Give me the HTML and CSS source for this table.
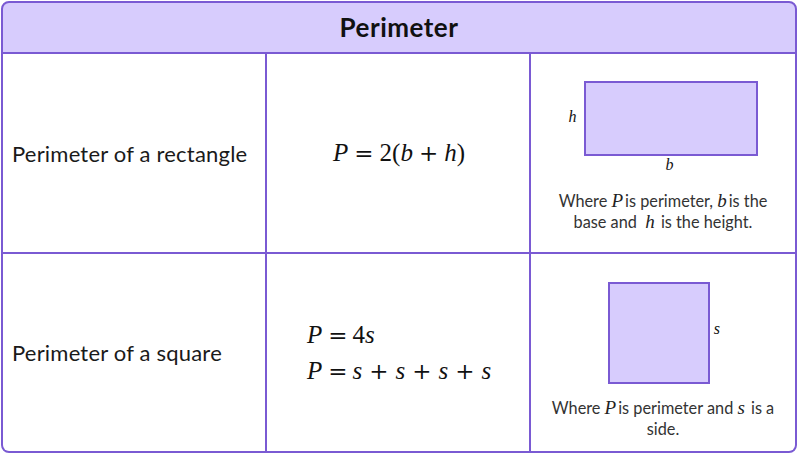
FILE: index.html
```html
<!DOCTYPE html>
<html>
<head>
<meta charset="utf-8">
<link rel="stylesheet" href="styles.css">
</head>
<body>
<div class="table">
  <div class="head">Perimeter</div>

  <div class="cell label">Perimeter of a rectangle</div>
  <div class="cell formula">
    <div class="math big"><i>P</i><span class="op">=</span>2(<i>b</i><span class="op">+</span><i>h</i>)</div>
  </div>
  <div class="cell diagram rect-cell">
    <div class="fig rect-fig">
      <span class="v hl"><i>h</i></span>
      <svg class="shape" width="174" height="75" viewBox="0 0 174 75"><rect x="1" y="1" width="172" height="73" fill="#d7ccfd" stroke="#7a5ad3" stroke-width="2"/></svg>
      <span class="v bl"><i>b</i></span>
    </div>
    <p class="caption">Where <i class="mv">P</i>is perimeter, <i class="mv">b</i>is the<br>base and &nbsp;<i class="mv">h</i> is the height.</p>
  </div>

  <div class="cell label">Perimeter of a square</div>
  <div class="cell formula sq-formula">
    <div class="stack">
      <div class="math"><i>P</i><span class="op tight">=</span>4<i>s</i></div>
      <div class="math"><i>P</i><span class="op tight">=</span><i>s</i><span class="op">+</span><i>s</i><span class="op">+</span><i>s</i><span class="op">+</span><i>s</i></div>
    </div>
  </div>
  <div class="cell diagram sq-cell">
    <div class="fig sq-fig">
      <svg class="shape" width="102" height="102" viewBox="0 0 102 102"><rect x="1" y="1" width="100" height="100" fill="#d7ccfd" stroke="#7a5ad3" stroke-width="2"/></svg>
      <span class="v sl"><i>s</i></span>
    </div>
    <p class="caption">Where <i class="mv">P</i>is perimeter and <i class="mv">s</i> is a<br>side.</p>
  </div>
</div>
</body>
</html>
```
FILE: styles.css
```css
html, body { margin: 0; padding: 0; background: #fff; }
body { font-family: Lato, "Open Sans", sans-serif; color: #1c1c1c; }

.table {
  margin: 1px;
  width: 796px;
  height: 452px;
  box-sizing: border-box;
  border: 2px solid #7a5ad3;
  border-radius: 8px;
  overflow: hidden;
  background: #7a5ad3;
  display: grid;
  grid-template-columns: 262px 262px 264px;
  grid-template-rows: 49px 198px 197px;
  gap: 2px;
}

.head {
  grid-column: 1 / 4;
  background: #d7ccfd;
  display: flex;
  align-items: center;
  justify-content: center;
  font-weight: 700;
  font-size: 26px;
  letter-spacing: 0.5px;
  color: #111;
  padding-bottom: 1px;
}

.cell { background: #fff; }

.label {
  display: flex;
  align-items: center;
  padding-left: 9px;
  font-size: 22px;
  letter-spacing: 0.2px;
  color: #1a1a1a;
}

.formula {
  display: flex;
  align-items: center;
  justify-content: center;
}

.math {
  font-family: "Liberation Serif", "DejaVu Serif", serif;
  font-size: 25px;
  color: #111;
  white-space: nowrap;
  line-height: 36px;
}
.math i { font-style: italic; }
.op {
  font-family: "DejaVu Serif", serif;
  font-size: 23px;
  font-weight: 300;
  margin: 0 6px;
}
.stack .op { margin: 0 7px; }
.stack .op.tight { margin: 0 5px 0 6px; }
.big { margin-top: 0; padding-left: 2px; }

.sq-formula { justify-content: flex-start; }
.stack {
  display: flex;
  flex-direction: column;
  gap: 0;
  margin-left: 40px;
  margin-top: 0;
}

.diagram {
  display: flex;
  flex-direction: column;
  align-items: center;
}

.fig { position: relative; }
.shape { display: block; }

.rect-cell { padding-top: 27px; }
.rect-fig { margin-left: 15px; }
.v {
  position: absolute;
  font-family: "Liberation Serif", "DejaVu Serif", serif;
  font-size: 16px;
  color: #111;
}
.hl { left: -15px; top: 27px; }
.bl { left: 82px; top: 75px; }

.sq-cell { padding-top: 28px; }
.sq-fig { margin-left: -8px; }
.sl { right: -10px; top: 38px; }

.caption {
  margin: 0;
  text-align: center;
  font-size: 16.3px;
  line-height: 21px;
  color: #333;
}
.rect-cell .caption { margin-top: 34px; }
.sq-cell .caption { margin-top: 13px; }
.mv {
  font-family: "Liberation Serif", "DejaVu Serif", serif;
  font-size: 19px;
  color: #222;
  margin-right: 2px;
}
```
